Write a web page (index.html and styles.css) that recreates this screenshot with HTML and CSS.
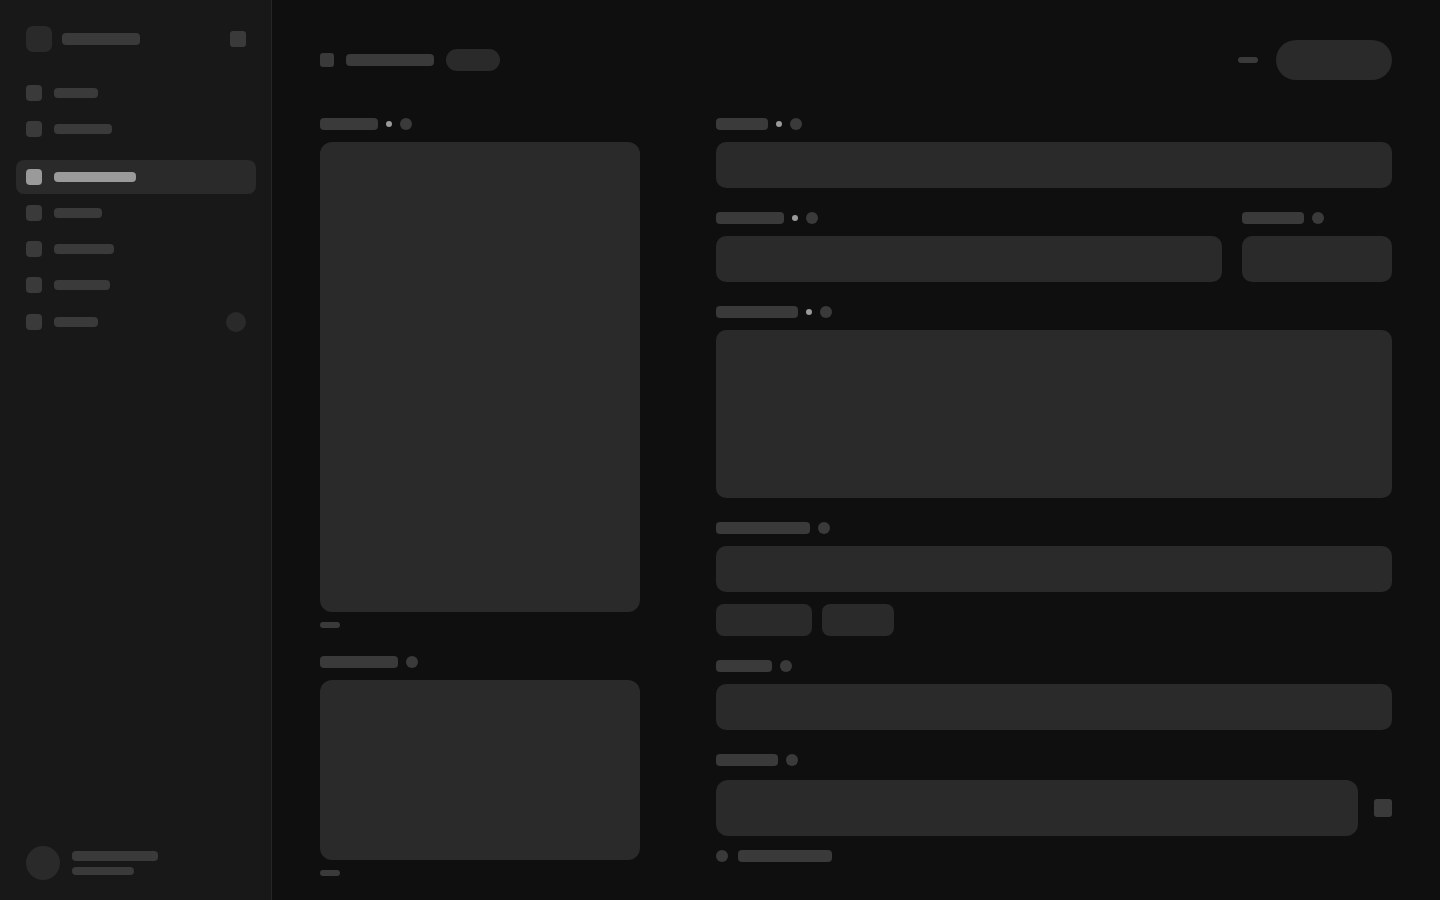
FILE: index.html
```html
<!DOCTYPE html>
<html lang="en">
<head>
<meta charset="utf-8">
<title>Loading</title>
<link rel="stylesheet" href="styles.css">
</head>
<body>
<div class="app">
  <aside class="sidebar">
    <div class="sb-head">
      <div class="logo"></div>
      <div class="brand"></div>
      <div class="toggle"></div>
    </div>
    <nav class="nav">
      <div class="nav-item"><span class="nav-icon"></span><span class="nav-text w44"></span></div>
      <div class="nav-item"><span class="nav-icon"></span><span class="nav-text w58"></span></div>
    </nav>
    <nav class="nav">
      <div class="nav-item active"><span class="nav-icon"></span><span class="nav-text w82"></span></div>
      <div class="nav-item"><span class="nav-icon"></span><span class="nav-text w48"></span></div>
      <div class="nav-item"><span class="nav-icon"></span><span class="nav-text w60"></span></div>
      <div class="nav-item"><span class="nav-icon"></span><span class="nav-text w56"></span></div>
      <div class="nav-item with-badge"><span class="nav-icon"></span><span class="nav-text w44"></span><span class="badge"></span></div>
    </nav>
    <div class="sb-foot">
      <div class="avatar"></div>
      <div class="user">
        <div class="user-name"></div>
        <div class="user-mail"></div>
      </div>
    </div>
  </aside>

  <main class="main">
    <header class="page-head">
      <div class="ph-left">
        <span class="ph-icon"></span>
        <span class="ph-title"></span>
        <span class="ph-pill"></span>
      </div>
      <div class="ph-right">
        <span class="ph-dash"></span>
        <span class="ph-button"></span>
      </div>
    </header>

    <div class="grid">
      <section class="col">
        <div class="field">
          <div class="field-label"><span class="lbl w58"></span><span class="dot"></span><span class="info"></span></div>
          <div class="surface cover"></div>
          <div class="caption"></div>
        </div>
        <div class="field gap-top">
          <div class="field-label"><span class="lbl w78"></span><span class="info"></span></div>
          <div class="surface thumb"></div>
          <div class="caption"></div>
        </div>
      </section>

      <section class="col fields">
        <div class="field">
          <div class="field-label"><span class="lbl w52"></span><span class="dot"></span><span class="info"></span></div>
          <div class="surface input"></div>
        </div>

        <div class="field-row">
          <div class="field grow">
            <div class="field-label"><span class="lbl w68"></span><span class="dot"></span><span class="info"></span></div>
            <div class="surface input"></div>
          </div>
          <div class="field narrow">
            <div class="field-label"><span class="lbl w62"></span><span class="info"></span></div>
            <div class="surface input"></div>
          </div>
        </div>

        <div class="field">
          <div class="field-label"><span class="lbl w82"></span><span class="dot"></span><span class="info"></span></div>
          <div class="surface textarea"></div>
        </div>

        <div class="field">
          <div class="field-label"><span class="lbl w94"></span><span class="info"></span></div>
          <div class="surface input"></div>
          <div class="chips">
            <span class="chip w96"></span>
            <span class="chip w72"></span>
          </div>
        </div>

        <div class="field">
          <div class="field-label"><span class="lbl w56"></span><span class="info"></span></div>
          <div class="surface input"></div>
        </div>

        <div class="field">
          <div class="field-label wide-gap"><span class="lbl w62"></span><span class="info"></span></div>
          <div class="input-row">
            <div class="surface input-lg"></div>
            <span class="side-btn"></span>
          </div>
          <div class="helper">
            <span class="info"></span>
            <span class="lbl w94"></span>
          </div>
        </div>
      </section>
    </div>
  </main>
</div>
</body>
</html>
```

FILE: styles.css
```css
html, body {
  margin: 0;
  padding: 0;
  background: #0f0f0f;
  font-family: "Inter", "Liberation Sans", sans-serif;
}

.app {
  display: flex;
  height: 900px;
  overflow: hidden;
}

/* ---------- Sidebar ---------- */
.sidebar {
  width: 272px;
  flex: 0 0 272px;
  box-sizing: border-box;
  background: #181818;
  border-right: 1px solid #262626;
  padding: 16px 15px 16px 16px;
  display: flex;
  flex-direction: column;
}

.sb-head {
  height: 46px;
  padding: 0 10px;
  display: flex;
  align-items: center;
  gap: 10px;
}

.logo {
  width: 26px;
  height: 26px;
  border-radius: 7px;
  background: #2a2a2a;
}

.brand {
  width: 78px;
  height: 12px;
  border-radius: 4px;
  background: #3a3a3a;
}

.toggle {
  margin-left: auto;
  width: 16px;
  height: 16px;
  border-radius: 3px;
  background: #3a3a3a;
}

.nav {
  margin-top: 14px;
  display: flex;
  flex-direction: column;
  gap: 2px;
}

.nav-item {
  height: 34px;
  padding: 0 10px;
  display: flex;
  align-items: center;
  gap: 12px;
  border-radius: 8px;
}

.nav-item.with-badge {
  height: 36px;
}

.nav-icon {
  width: 16px;
  height: 16px;
  border-radius: 4px;
  background: #3a3a3a;
}

.nav-text {
  height: 10px;
  border-radius: 4px;
  background: #3a3a3a;
}

.nav-item.active {
  background: #2a2a2a;
}

.nav-item.active .nav-icon,
.nav-item.active .nav-text {
  background: #9a9a9a;
}

.badge {
  margin-left: auto;
  width: 20px;
  height: 20px;
  border-radius: 50%;
  background: #2a2a2a;
}

.sb-foot {
  margin-top: auto;
  padding: 4px 10px;
  display: flex;
  align-items: center;
  gap: 12px;
}

.avatar {
  width: 34px;
  height: 34px;
  border-radius: 50%;
  background: #2a2a2a;
}

.user {
  display: flex;
  flex-direction: column;
  gap: 6px;
}

.user-name {
  width: 86px;
  height: 10px;
  border-radius: 4px;
  background: #3a3a3a;
}

.user-mail {
  width: 62px;
  height: 8px;
  border-radius: 4px;
  background: #3a3a3a;
}

/* ---------- Main ---------- */
.main {
  flex: 1;
  box-sizing: border-box;
  padding: 40px 48px;
}

.page-head {
  height: 40px;
  display: flex;
  align-items: center;
  margin-bottom: 38px;
}

.ph-left {
  display: flex;
  align-items: center;
  gap: 12px;
}

.ph-icon {
  width: 14px;
  height: 14px;
  border-radius: 3px;
  background: #3a3a3a;
}

.ph-title {
  width: 88px;
  height: 12px;
  border-radius: 4px;
  background: #3a3a3a;
}

.ph-pill {
  width: 54px;
  height: 22px;
  border-radius: 11px;
  background: #2a2a2a;
}

.ph-right {
  margin-left: auto;
  display: flex;
  align-items: center;
  gap: 18px;
}

.ph-dash {
  width: 20px;
  height: 6px;
  border-radius: 3px;
  background: #3a3a3a;
}

.ph-button {
  width: 116px;
  height: 40px;
  border-radius: 20px;
  background: #2a2a2a;
}

.grid {
  display: grid;
  grid-template-columns: 320px 1fr;
  column-gap: 76px;
  align-items: start;
}

.col {
  display: flex;
  flex-direction: column;
}

.fields {
  gap: 24px;
}

.field {
  display: flex;
  flex-direction: column;
}

.gap-top {
  margin-top: 28px;
}

.field-label {
  height: 12px;
  display: flex;
  align-items: center;
  gap: 8px;
  margin-bottom: 12px;
}

.field-label.wide-gap {
  margin-bottom: 14px;
}

.lbl {
  height: 12px;
  border-radius: 4px;
  background: #3a3a3a;
}

.dot {
  width: 6px;
  height: 6px;
  border-radius: 50%;
  background: #9a9a9a;
}

.info {
  width: 12px;
  height: 12px;
  border-radius: 50%;
  background: #3a3a3a;
}

.surface {
  background: #2a2a2a;
  border-radius: 10px;
}

.cover {
  height: 470px;
  border-radius: 12px;
}

.thumb {
  height: 180px;
  border-radius: 12px;
}

.caption {
  margin-top: 10px;
  width: 20px;
  height: 6px;
  border-radius: 3px;
  background: #3a3a3a;
}

.input {
  height: 46px;
}

.textarea {
  height: 168px;
}

.field-row {
  display: flex;
  gap: 20px;
}

.grow {
  flex: 1;
}

.narrow {
  width: 150px;
  flex: 0 0 150px;
}

.chips {
  margin-top: 12px;
  display: flex;
  gap: 10px;
}

.chip {
  height: 32px;
  border-radius: 8px;
  background: #2a2a2a;
}

.input-row {
  display: flex;
  align-items: center;
  gap: 16px;
}

.input-lg {
  flex: 1;
  height: 56px;
  border-radius: 12px;
}

.side-btn {
  width: 18px;
  height: 18px;
  border-radius: 3px;
  background: #3a3a3a;
}

.helper {
  margin-top: 14px;
  display: flex;
  align-items: center;
  gap: 10px;
}

/* widths */
.w44 { width: 44px; }
.w48 { width: 48px; }
.w52 { width: 52px; }
.w56 { width: 56px; }
.w58 { width: 58px; }
.w60 { width: 60px; }
.w62 { width: 62px; }
.w68 { width: 68px; }
.w72 { width: 72px; }
.w78 { width: 78px; }
.w82 { width: 82px; }
.w94 { width: 94px; }
.w96 { width: 96px; }
```
